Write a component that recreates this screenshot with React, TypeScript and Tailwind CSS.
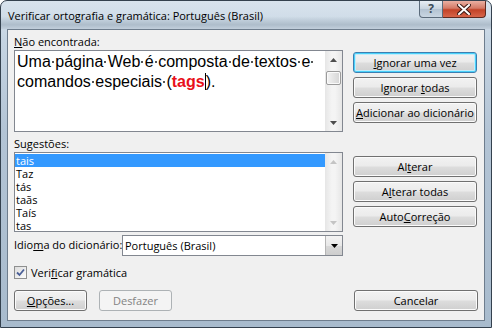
import React from 'react';

const ui = "font-['Segoe_UI','Open_Sans',sans-serif]";

function Arrow({ up, disabled }: { up?: boolean; disabled?: boolean }) {
  return (
    <svg width="7" height="4" viewBox="0 0 7 4">
      <polygon
        points={up ? '0,4 7,4 3.5,0' : '0,0 7,0 3.5,4'}
        fill={disabled ? '#c4c4c4' : '#4d4d4d'}
      />
    </svg>
  );
}

function Scrollbar({ thumb, disabled }: { thumb?: boolean; disabled?: boolean }) {
  return (
    <div className="w-[17px] h-full flex flex-col bg-[linear-gradient(to_right,#e6e6e6,#f4f4f4_40%,#f4f4f4_60%,#e6e6e6)]">
      <div className="h-[17px] flex items-center justify-center">
        <Arrow up disabled={disabled} />
      </div>
      <div className="flex-1 px-[1px] pt-[3px]">
        {thumb && (
          <div className="h-[14px] rounded-[2px] border border-[#9b9b9b] bg-[linear-gradient(to_right,#f3f3f3,#e4e4e4_50%,#d5d5d5)] shadow-[inset_0_0_0_1px_#fafafa]" />
        )}
      </div>
      <div className="h-[17px] flex items-center justify-center">
        <Arrow disabled={disabled} />
      </div>
    </div>
  );
}

function Btn({
  children,
  def,
  disabled,
  className = '',
}: {
  children: React.ReactNode;
  def?: boolean;
  disabled?: boolean;
  className?: string;
}) {
  let look =
    'border-[#707070] text-black bg-[linear-gradient(to_bottom,#f2f2f2_0%,#ebebeb_48%,#dddddd_52%,#cfcfcf_100%)] shadow-[inset_0_0_0_1px_#fbfbfb]';
  if (def)
    look =
      'border-[#3c7fb1] text-black bg-[linear-gradient(to_bottom,#f2f2f2_0%,#ebebeb_48%,#dddddd_52%,#cfcfcf_100%)] shadow-[inset_0_0_0_1px_#48d1fa,inset_0_0_0_2px_#c2ecfa]';
  if (disabled) look = 'border-[#adb2b5] text-[#838383] bg-[#f4f4f4]';
  return (
    <div
      className={`h-[21px] rounded-[3px] border flex items-center justify-center whitespace-nowrap text-[11px] leading-none ${look} ${className}`}
    >
      {children}
    </div>
  );
}

function Dot() {
  // marca de formatação (espaço)
  return (
    <span className="relative">
      {' '}
      <span className="absolute left-[1px] top-[8px] w-[2px] h-[2px] bg-[#555]" />
    </span>
  );
}

function Line({ words }: { words: string[] }) {
  return (
    <>
      {words.map((w, i) => (
        <React.Fragment key={i}>
          {w}
          <Dot />
        </React.Fragment>
      ))}
    </>
  );
}

const suggestions = ['tais', 'Taz', 'tás', 'taãs', 'Taís', 'tas'];

export default function App() {
  return (
    <div
      className={`w-[492px] h-[328px] flex flex-col overflow-hidden rounded-t-[7px] border border-[#34414e] bg-[linear-gradient(to_bottom,#d8e3ed_0%,#c5d4e2_12%,#b3c4d5_40%,#a8bbcd_100%)] ${ui}`}
    >
      {/* barra de título */}
      <div className="h-[28px] flex items-start justify-between pl-[7px] pr-[5px] bg-[linear-gradient(to_bottom,transparent_55%,#aebdcb_85%,#c2cfdc)]">
        <div className="pt-[7px] text-[11px] text-black leading-[16px] whitespace-nowrap">
          Verificar ortografia e gramática: Português (Brasil)
        </div>
        <div className="flex">
          <div className="w-[24px] h-[17px] rounded-bl-[4px] border border-t-0 border-[#5b6b7b] bg-[linear-gradient(to_bottom,#e8eef4,#c7d3de_50%,#b2c2d1_50%,#c9d6e2)] flex items-center justify-center text-[12px] font-bold text-[#3b4a58] leading-none">
            ?
          </div>
          <div className="w-[43px] h-[17px] rounded-br-[4px] border border-t-0 border-l-0 border-[#5e2a20] bg-[linear-gradient(to_bottom,#eab0a2,#d47a66_45%,#c24328_55%,#d7654a)] flex items-center justify-center">
            <svg width="14" height="11" viewBox="0 0 14 11">
              <path
                d="M2 1 L12 10 M12 1 L2 10"
                stroke="#3d1a14"
                strokeWidth="4"
                strokeLinecap="square"
              />
              <path
                d="M2 1 L12 10 M12 1 L2 10"
                stroke="#ffffff"
                strokeWidth="2"
                strokeLinecap="square"
              />
            </svg>
          </div>
        </div>
      </div>

      {/* área do diálogo */}
      <div className="flex-1 mx-[6px] mb-[6px] border border-[#6e7d8d] bg-[#f0f0f0] px-[6px] pt-[4px] flex flex-col text-[11px] text-black whitespace-nowrap">
        <div className="flex gap-[10px]">
          <div className="w-[329px]">
            <div className="h-[16px] leading-[16px]">
              <span className="underline">N</span>ão encontrada:
            </div>
            <div className="h-[82px] flex border border-[#828790] bg-white">
              <div className="flex-1 pl-[2px] pt-[1px] font-['Liberation_Sans',Arial,sans-serif] text-[16px] leading-[20px] text-black">
                <div>
                  <Line words={['Uma', 'página', 'Web', 'é', 'composta', 'de', 'textos', 'e']} />
                </div>
                <div>
                  comandos
                  <Dot />
                  especiais
                  <Dot />
                  (<span className="font-bold text-[#e8101a]">tags</span>
                  <span className="inline-block w-[1px] h-[17px] bg-black align-[-3px]" />
                  ).
                </div>
              </div>
              <Scrollbar thumb />
            </div>
          </div>
          <div className="w-[124px] pt-[18px] flex flex-col gap-[4px]">
            <Btn def>
              <span className="underline">I</span>gnorar uma vez
            </Btn>
            <Btn>
              Ignorar&nbsp;<span className="underline">t</span>odas
            </Btn>
            <Btn>
              <span className="underline">A</span>dicionar ao dicionário
            </Btn>
          </div>
        </div>

        <div className="flex gap-[10px] mt-[4px]">
          <div className="w-[329px]">
            <div className="h-[16px] leading-[16px]">
              Su<span className="underline">g</span>estões:
            </div>
            <div className="h-[80px] flex border border-[#828790] bg-white">
              <div className="flex-1 pt-[1px]">
                {suggestions.map((s, i) => (
                  <div
                    key={s}
                    className={`h-[13px] leading-[13px] pl-[1px] ${
                      i === 0 ? 'bg-[#3399ff] text-white' : 'text-black'
                    }`}
                  >
                    {s}
                  </div>
                ))}
              </div>
              <Scrollbar disabled />
            </div>
          </div>
          <div className="w-[124px] pt-[20px] flex flex-col gap-[4px]">
            <Btn>
              Al<span className="underline">t</span>erar
            </Btn>
            <Btn>
              A<span className="underline">l</span>terar todas
            </Btn>
            <Btn>
              Auto<span className="underline">C</span>orreção
            </Btn>
          </div>
        </div>

        <div className="flex items-center mt-[3px] h-[21px]">
          <div className="w-[108px]">
            Idio<span className="underline">m</span>a do dicionário:
          </div>
          <div className="w-[221px] h-[21px] flex border border-[#828790] bg-white">
            <div className="flex-1 pl-[2px] leading-[19px]">Português (Brasil)</div>
            <div className="w-[17px] h-[19px] border-l border-[#b5b5b5] bg-[linear-gradient(to_bottom,#f3f3f3,#e8e8e8_50%,#d9d9d9_50%,#cdcdcd)] flex items-center justify-center">
              <svg width="7" height="4" viewBox="0 0 7 4">
                <polygon points="0,0 7,0 3.5,4" fill="#000" />
              </svg>
            </div>
          </div>
        </div>

        <div className="flex items-center gap-[4px] mt-[10px] h-[13px]">
          <div className="w-[13px] h-[13px] border border-[#8e8f8f] bg-[linear-gradient(135deg,#dcdcdc,#fbfbfb)] flex items-center justify-center">
            <svg width="9" height="9" viewBox="0 0 9 9">
              <path d="M1 4.5 L3.5 7 L8 1.5" stroke="#4a5f97" strokeWidth="1.8" fill="none" />
            </svg>
          </div>
          <div className="leading-[13px]">
            Veri<span className="underline">f</span>icar gramática
          </div>
        </div>

        <div className="flex mt-[11px]">
          <Btn className="w-[73px]">
            <span className="underline">O</span>pções...
          </Btn>
          <Btn disabled className="w-[73px] ml-[12px]">
            Desfazer
          </Btn>
          <Btn className="w-[124px] ml-auto">Cancelar</Btn>
        </div>
      </div>
    </div>
  );
}
